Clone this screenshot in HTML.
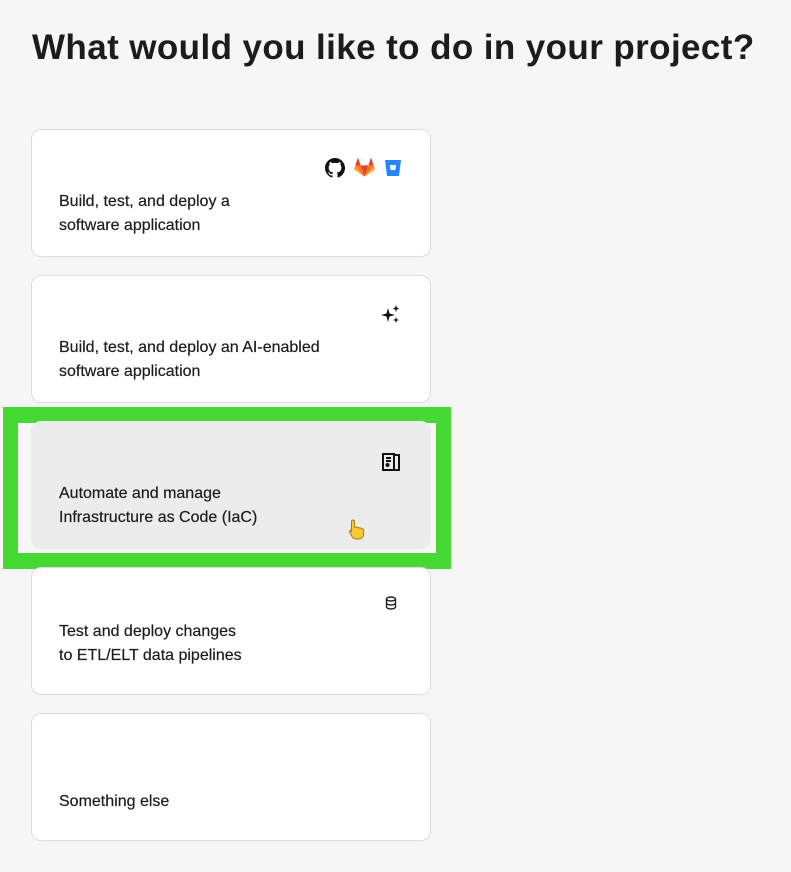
<!DOCTYPE html>
<html><head><meta charset="utf-8"><style>
body{margin:0;background:#f6f6f6;font-family:"Liberation Sans",sans-serif;color:#1c1c1c;width:791px;height:872px;position:relative;overflow:hidden}
h1{position:absolute;left:32px;top:28px;margin:0;font-size:35px;font-weight:bold;letter-spacing:0.4px;white-space:nowrap}
.card{position:absolute;left:31px;width:398px;height:126px;background:#fff;border:1px solid #dcdcdc;border-radius:10px;box-sizing:content-box}
.card .t{position:absolute;left:27px;top:60px;font-size:16px;line-height:24px;-webkit-text-stroke:0.2px #1c1c1c}
.ic{position:absolute;top:28px;right:28px}
.green{position:absolute;left:3px;top:407px;width:448px;height:162px;background:#46d933}
.inner{position:absolute;left:18px;top:423px;width:418px;height:130px;background:#f6f6f6}
</style></head><body>
<h1>What would you like to do in your project?</h1>
<div class="card" style="top:129px"><div class="ic" style="right:28px;display:flex;gap:9px;align-items:center">
<svg width="20" height="20" viewBox="0 0 16 16"><path fill="#111" d="M8 0C3.58 0 0 3.58 0 8c0 3.540 2.29 6.53 5.47 7.59.4.07.55-.17.55-.38v-1.33c-2.230.48-2.7-1.07-2.7-1.07-.36-.92-.89-1.17-.89-1.17-.73-.5.06-.49.06-.49.8.06 1.230.83 1.230.83.72 1.22 1.870.87 2.330.66.07-.52.28-.87.51-1.070-1.78-.2-3.650-.89-3.650-3.95 0-.87.31-1.59.83-2.15-.08-.2-.36-1.02.08-2.12 0 0 .67-.21 2.2.82a7.6 7.6 0 0 1 4 0c1.53-1.04 2.2-.82 2.2-.82.44 1.1.16 1.92.08 2.12.51.56.82 1.27.82 2.15 0 3.07-1.87 3.75-3.65 3.95.29.25.54.73.54 1.48v2.2c0 .21.15.46.55.38A8 8 0 0 0 16 8c0-4.42-3.58-8-8-8z"/></svg>
<svg width="21" height="20" viewBox="0 0 24 22"><path fill="#e24329" d="M12 21 16.4 8H7.6z"/><path fill="#fc6d26" d="M12 21 7.6 8H1.5z"/><path fill="#fca326" d="M1.5 8 .2 12c-.1.4 0 .8.4 1L12 21z"/><path fill="#e24329" d="M1.5 8h6.1L5 0c-.1-.4-.7-.4-.8 0z"/><path fill="#fc6d26" d="M12 21 16.4 8h6.1z"/><path fill="#fca326" d="M22.5 8l1.3 4c.1.4 0 .8-.4 1L12 21z"/><path fill="#e24329" d="M22.5 8h-6.1L19 0c.1-.4.7-.4.8 0z"/></svg>
<svg width="18" height="18" viewBox="0 0 18 18"><path fill="#2684ff" d="M1 1h16l-2 16H3z"/><path fill="#fff" d="M6 6h6l-.6 5H6.6z"/></svg>
</div><div class="t">Build, test, and deploy a<br>software application</div></div>
<div class="card" style="top:275px"><div class="ic" style="top:28px;right:28px"><svg width="22" height="22" viewBox="0 0 22 22"><path fill="#111" d="M8 4 9.5 9.5 15 11 9.5 12.5 8 18 6.5 12.5 1 11 6.5 9.5z M16 1l.9 2.6 2.6.9-2.6.9L16 8l-.9-2.6-2.6-.9 2.6-.9z M16 13l.8 2.2 2.2.8-2.2.8L16 19l-.8-2.2-2.2-.8 2.2-.8z"/></svg></div><div class="t">Build, test, and deploy an AI-enabled<br>software application</div></div>
<div class="green"></div><div class="inner"></div>
<div class="card" style="top:421px;background:#ececec;border-color:#ececec"><div class="ic" style="top:30px;right:29px"><svg width="20" height="20" viewBox="0 0 20 20" fill="none" stroke="#111" stroke-width="2"><rect x="2" y="2" width="11" height="16"/><path d="M13 3h5v15h-5"/><path d="M5 6h5M5 9h5"/><circle cx="6.5" cy="13" r="1" fill="#111"/></svg></div><div class="t">Automate and manage<br>Infrastructure as Code (IaC)</div>
<div style="position:absolute;left:315px;top:96px;width:18px;height:20px"><svg width="20" height="22" viewBox="0 0 20 22"><path d="M6 2c1 0 1.5.6 1.5 1.5V9h1c1 0 1.5.4 1.7.8.5-.4 1.8-.4 2.2.3.6-.3 1.8-.2 2.2.6.6-.1 2 0 2 1.6V16c0 3-2 5-5 5H9c-2 0-3-1-4-2.5L2.5 14c-.5-1 .5-2 1.5-1.2L4.5 14V3.5C4.5 2.6 5 2 6 2z" fill="#f7c933" stroke="#a67d10" stroke-width="1"/></svg></div></div>
<div class="card" style="top:567px"><div class="ic" style="top:28px;right:33px"><svg width="12" height="14" viewBox="0 0 12 14" fill="none" stroke="#222" stroke-width="1.4"><ellipse cx="6" cy="3" rx="4.5" ry="2"/><path d="M1.5 3v8c0 1.1 2 2 4.5 2s4.5-.9 4.5-2V3M1.5 7c0 1.1 2 2 4.5 2s4.5-.9 4.5-2"/></svg></div><div class="t" style="top:52px">Test and deploy changes<br>to ETL/ELT data pipelines</div></div>
<div class="card" style="top:713px"><div class="t" style="top:76px">Something else</div></div>
</body></html>
